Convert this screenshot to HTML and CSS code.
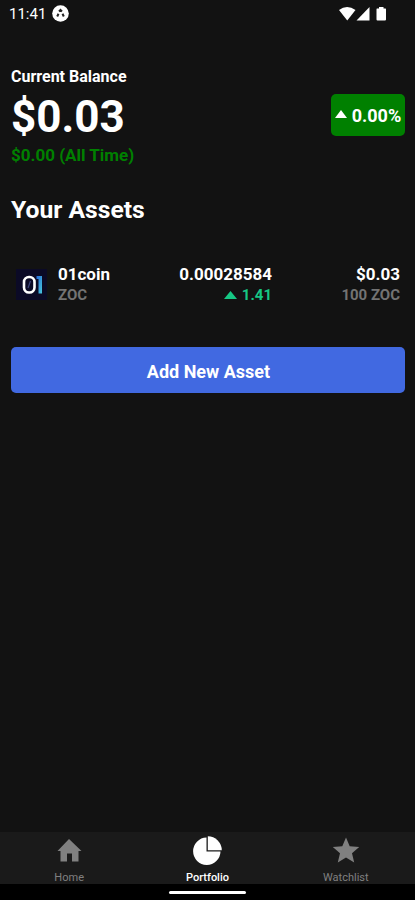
FILE: index.html
```html
<!DOCTYPE html>
<html lang="en">
<head>
    <meta charset="UTF-8">
    <meta name="viewport" content="width=device-width, initial-scale=1.0">
    <link rel="stylesheet" href="styles.css">
    <title>Portfolio</title>
</head>
<body>
    <div class="screen">
        <header class="status">
            <span class="time">11:41</span>
            <svg class="app-icon" width="17" height="17" viewBox="0 0 17 17">
                <circle cx="8.5" cy="8.5" r="8.3" fill="#fff"/>
                <path d="M5.200 11.500L6.500 8.800M7 6.500L8.500 5L10 6.500M10.500 8.800L11.800 11.500" fill="none" stroke="#222" stroke-width="2"/>
            </svg>
            <svg class="signals" width="49" height="16" viewBox="0 0 49 16" fill="#fff">
                <path d="M0 4Q8 -2 16.500 4L8.250 14.500Z"/>
                <path d="M17.500 14.500L30.500 1V14.500Z"/>
                <path d="M38 2.500H40V1H44.500V2.500H46.500Q47 2.500 47 3.500V13.500Q47 14.500 46 14.500H38.500Q37.500 14.500 37.500 13.500V3.500Q37.500 2.500 38 2.500Z"/>
            </svg>
        </header>

        <main>
            <section class="balance">
                <div>
                    <p class="balance-label">Current Balance</p>
                    <p class="balance-value">$0.03</p>
                    <p class="balance-change">$0.00 (All Time)</p>
                </div>
                <div class="percent">
                    <svg class="arrow" width="12" height="8" viewBox="0 0 12 8"><path d="M0 8L6 0L12 8Z" fill="#fff"/></svg>
                    <span>0.00%</span>
                </div>
            </section>

            <h1>Your Assets</h1>

            <section class="asset">
                <svg class="coin" width="31" height="31" viewBox="0 0 31 31">
                    <defs>
                        <linearGradient id="one" x1="0" y1="0" x2="1" y2="1">
                            <stop offset="0" stop-color="#2468d8"/>
                            <stop offset="1" stop-color="#48c8dc"/>
                        </linearGradient>
                    </defs>
                    <rect width="31" height="31" fill="#0b0a26"/>
                    <rect x="8" y="8" width="10.500" height="15.500" rx="5" fill="none" stroke="#fff" stroke-width="2.600"/>
                    <path d="M14.500 12L12 19" stroke="#3d447c" stroke-width="1.200"/>
                    <path d="M20.500 7H26V24.500H22.500V10H20.500Z" fill="url(#one)"/>
                </svg>
                <div class="asset-name">
                    <p class="main-text">01coin</p>
                    <p class="sub-text">ZOC</p>
                </div>
                <div class="asset-price">
                    <p class="main-text">0.00028584</p>
                    <p class="sub-text up">
                        <svg class="arrow" width="13" height="8" viewBox="0 0 13 8"><path d="M0 8L6.500 0L13 8Z" fill="#16c784"/></svg>
                        <span>1.41</span>
                    </p>
                </div>
                <div class="asset-holding">
                    <p class="main-text">$0.03</p>
                    <p class="sub-text">100 ZOC</p>
                </div>
            </section>

            <button class="add" type="button">Add New Asset</button>
        </main>

        <nav>
            <a class="tab">
                <svg width="30" height="30" viewBox="0 0 30 30"><path d="M15 3L27.500 15H24.500V25.500H18V17.500H13V25.500H6.500V15H3.500Z" fill="#808080"/></svg>
                <span>Home</span>
            </a>
            <a class="tab active">
                <svg width="30" height="30" viewBox="0 0 30 30" fill="#fff">
                    <path d="M14.500 1.500V15.500H28.500A13.700 13.700 0 1 1 14.500 1.500Z"/>
                    <path d="M15.800 0.300A14 14 0 0 1 29.800 14.300H15.800Z"/>
                </svg>
                <span>Portfolio</span>
            </a>
            <a class="tab">
                <svg width="30" height="30" viewBox="0 0 30 30"><path d="M15 1.500L18.700 10.300L28.200 11L21 17.200L23.200 26.500L15 21.500L6.800 26.500L9 17.200L1.800 11L11.300 10.300Z" fill="#808080"/></svg>
                <span>Watchlist</span>
            </a>
        </nav>
        <footer><div class="handle"></div></footer>
    </div>
</body>
</html>
```
FILE: styles.css
```css
* {
    padding: 0;
    margin: 0;
    box-sizing: border-box;
}
body {
    background-color: #121212;
    color: white;
    font-family: Roboto, sans-serif;
}
.screen {
    height: 900px;
    display: flex;
    flex-direction: column;
}
svg {
    display: block;
    flex-shrink: 0;
}
.status {
    height: 27px;
    padding: 0 27px 0 9px;
    display: flex;
    align-items: center;
}
.time {
    font-size: 15px;
    width: 43px;
}
.signals {
    margin-left: auto;
}
main {
    flex: 1;
    padding: 40px 10px 0 11px;
}
.balance {
    display: flex;
    justify-content: space-between;
    align-items: center;
}
.balance-label {
    font-size: 16px;
    font-weight: 700;
    line-height: 20px;
}
.balance-value {
    font-size: 44px;
    font-weight: 700;
    line-height: 60px;
}
.balance-change {
    margin-top: -2px;
    font-size: 17px;
    font-weight: 700;
    line-height: 20px;
    color: green;
}
.percent {
    width: 74px;
    height: 42px;
    margin-bottom: 2px;
    border-radius: 5px;
    background-color: green;
    display: flex;
    justify-content: center;
    align-items: center;
    gap: 5px;
    font-size: 18px;
    font-weight: 700;
}
.arrow {
    margin-bottom: 2px;
}
h1 {
    margin-top: 29px;
    font-size: 24.7px;
    font-weight: 700;
    line-height: 32px;
}
.asset {
    margin-top: 37px;
    padding: 0 5px;
    height: 43px;
    display: flex;
    align-items: center;
}
.coin {
    margin-right: 11px;
}
.asset-name {
    width: 90px;
}
.asset-price {
    width: 124px;
    text-align: right;
}
.asset-holding {
    margin-left: auto;
    text-align: right;
}
.main-text {
    font-size: 17px;
    font-weight: 700;
    line-height: 22px;
}
.sub-text {
    font-size: 15px;
    font-weight: 700;
    line-height: 21px;
    color: #737373;
}
.up {
    display: flex;
    justify-content: flex-end;
    align-items: center;
    gap: 5px;
    color: #16c784;
}
.add {
    display: block;
    width: 100%;
    height: 46px;
    margin-top: 41px;
    padding: 2px 0 0 1px;
    border: none;
    border-radius: 5px;
    background-color: #4169e1;
    color: white;
    font-family: inherit;
    font-size: 18px;
    font-weight: 700;
}
nav {
    height: 52px;
    padding-top: 4px;
    background-color: #1a1a1a;
    display: flex;
}
.tab {
    flex: 1;
    display: flex;
    flex-direction: column;
    align-items: center;
    gap: 4px;
    color: #808080;
    font-size: 11px;
    line-height: 15px;
}
.active {
    color: white;
    font-weight: 500;
}
footer {
    height: 16px;
    background-color: black;
    display: flex;
    justify-content: center;
    padding-top: 7px;
}
.handle {
    width: 77px;
    height: 3px;
    border-radius: 2px;
    background-color: white;
}
```
